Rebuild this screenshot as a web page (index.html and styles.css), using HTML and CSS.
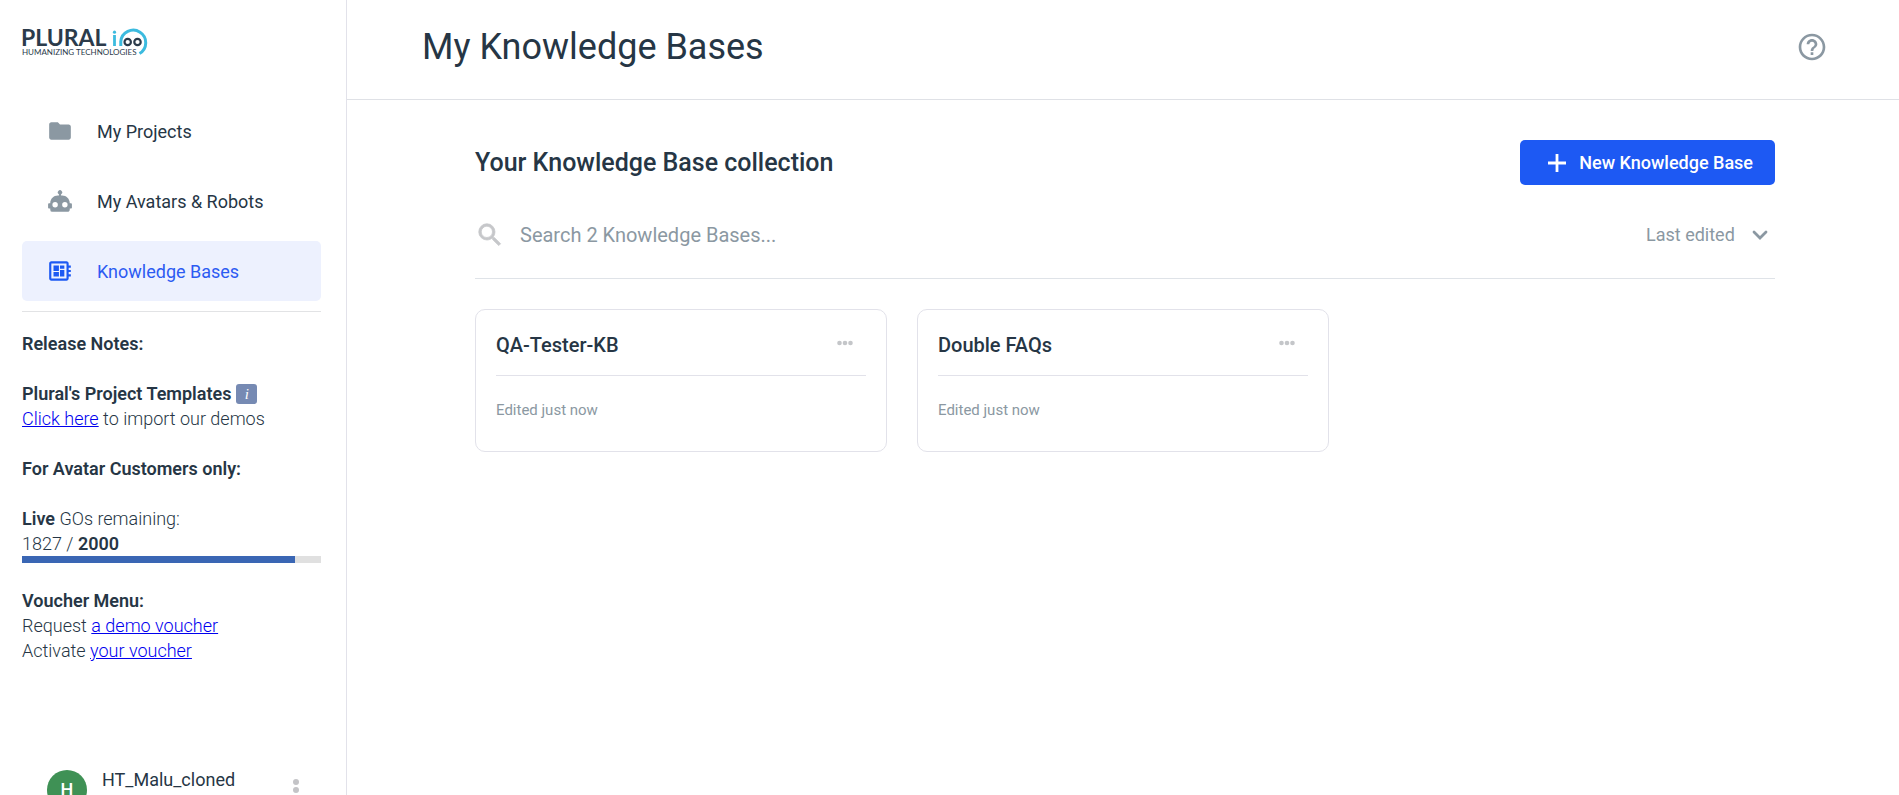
FILE: index.html
```html
<!DOCTYPE html>
<html lang="en">
<head>
<meta charset="utf-8">
<title>My Knowledge Bases</title>
<link rel="stylesheet" href="styles.css">
</head>
<body>
<div class="app">
  <aside class="sidebar">
    <a class="logo" href="#" aria-label="Plural home">
      <svg width="128" height="40" viewBox="0 -8 128 40">
        <text class="logo-name" x="-1" y="20">PLURAL</text>
        <text class="logo-tag" x="0" y="29">HUMANIZING TECHNOLOGIES</text>
        <path d="M92.500 9v11" stroke="#3cbbdf" stroke-width="2.800"/>
        <circle cx="92.500" cy="6.200" r="1.600" fill="#3cbbdf"/>
        <path d="M98.800 20V15.500A12.500 12.500 0 1 1 117.500 27.500" fill="none" stroke="#3cbbdf" stroke-width="3"/>
        <circle cx="105.700" cy="16" r="3.200" fill="none" stroke="#2b3b4b" stroke-width="2.200"/>
        <circle cx="115.500" cy="16" r="3.200" fill="none" stroke="#2b3b4b" stroke-width="2.200"/>
      </svg>
    </a>
    <nav class="nav">
      <a class="nav-item" href="#">
        <svg class="icon" width="26" height="26" viewBox="0 0 24 24"><path d="M10 4H4c-1.100 0-2 .9-2 2v12c0 1.100.9 2 2 2h16c1.100 0 2-.9 2-2V8c0-1.100-.9-2-2-2h-8z"/></svg>
        <span>My Projects</span>
      </a>
      <a class="nav-item" href="#">
        <svg class="icon" width="26" height="26" viewBox="0 0 24 24"><path d="M22 14h-1c0-3.870-3.130-7-7-7h-1V5.730A2 2 0 1 0 11 5.730V7h-1c-3.870 0-7 3.130-7 7H2c-.55 0-1 .45-1 1v3c0 .55.45 1 1 1h1v1a2 2 0 0 0 2 2h14c1.110 0 2-.89 2-2v-1h1c.55 0 1-.45 1-1v-3c0-.55-.45-1-1-1M7.500 18a2.500 2.500 0 1 1 0-5 2.500 2.500 0 0 1 0 5m9 0a2.500 2.500 0 1 1 0-5 2.500 2.500 0 0 1 0 5"/></svg>
        <span>My Avatars &amp; Robots</span>
      </a>
      <a class="nav-item active" href="#" aria-current="page">
        <svg class="icon" width="26" height="26" viewBox="0 0 24 24"><path d="M22 9V7h-2V5c0-1.100-.9-2-2-2H4c-1.100 0-2 .9-2 2v14c0 1.100.9 2 2 2h14c1.100 0 2-.9 2-2v-2h2v-2h-2v-2h2v-2h-2V9h2zm-4 10H4V5h14v14zM6 13h5v4H6zm6-6h4v3h-4zM6 7h5v5H6zm6 4h4v6h-4z"/></svg>
        <span>Knowledge Bases</span>
      </a>
    </nav>
    <section class="notes">
      <p><strong>Release Notes:</strong></p>
      <div>
        <p class="with-badge"><strong>Plural's Project Templates</strong><button class="info" type="button" aria-label="About templates"><i>i</i></button></p>
        <p><a href="#">Click here</a> to import our demos</p>
      </div>
      <p><strong>For Avatar Customers only:</strong></p>
      <div>
        <p><strong>Live</strong> GOs remaining:</p>
        <p>1827 / <strong>2000</strong></p>
        <div class="meter" role="progressbar" aria-label="Live GOs remaining" aria-valuenow="1827" aria-valuemin="0" aria-valuemax="2000"><div class="meter-fill" style="width:91.35%"></div></div>
      </div>
      <div class="voucher">
        <p><strong>Voucher Menu:</strong></p>
        <p>Request <a href="#">a demo voucher</a></p>
        <p>Activate <a href="#">your voucher</a></p>
      </div>
    </section>
    <div class="user">
      <span class="avatar">H</span>
      <span class="user-name">HT_Malu_cloned</span>
      <button class="icon-button" type="button" aria-label="Account menu">
        <svg width="8" height="24" viewBox="0 0 8 24" fill="#c4c4c7"><circle cx="4" cy="4" r="3"/><circle cx="4" cy="12" r="3"/><circle cx="4" cy="20" r="3"/></svg>
      </button>
    </div>
  </aside>

  <main class="main">
    <header class="header">
      <h1>My Knowledge Bases</h1>
      <button class="icon-button" type="button" aria-label="Help">
        <svg class="icon" width="32" height="32" viewBox="0 0 24 24"><path d="M11 18h2v-2h-2v2zm1-16C6.480 2 2 6.480 2 12s4.480 10 10 10 10-4.480 10-10S17.520 2 12 2zm0 18c-4.410 0-8-3.590-8-8s3.590-8 8-8 8 3.590 8 8-3.590 8-8 8zm0-14c-2.210 0-4 1.790-4 4h2c0-1.100.9-2 2-2s2 .9 2 2c0 2-3 1.750-3 5h2c0-2.250 3-2.500 3-5 0-2.210-1.790-4-4-4z"/></svg>
      </button>
    </header>
    <section class="content">
      <div class="title-row">
        <h2>Your Knowledge Base collection</h2>
        <button class="primary" type="button">
          <svg width="20" height="20" viewBox="0 0 20 20"><path d="M10 1v18M1 10h18" stroke="#fff" stroke-width="2.800"/></svg>
          New Knowledge Base
        </button>
      </div>
      <div class="filter-row">
        <label class="search">
          <svg width="30" height="30" viewBox="0 0 24 24" fill="#c6c7ca" stroke="#c6c7ca" stroke-width=".6"><path d="M15.500 14h-.79l-.28-.27A6.470 6.470 0 0 0 16 9.500 6.500 6.500 0 1 0 9.500 16c1.610 0 3.090-.59 4.230-1.570l.27.28v.79l5 4.990L20.490 19l-4.990-5zm-6 0C7.010 14 5 11.990 5 9.500S7.010 5 9.500 5 14 7.010 14 9.500 11.990 14 9.500 14z"/></svg>
          <input type="text" placeholder="Search 2 Knowledge Bases..." aria-label="Search knowledge bases">
        </label>
        <div class="sort">
          <select aria-label="Sort by"><option>Last edited</option></select>
          <svg width="16" height="10" viewBox="0 0 16 10"><path d="M2 2l6 6 6-6" fill="none" stroke="#8b98a2" stroke-width="2.800" stroke-linecap="round"/></svg>
        </div>
      </div>
      <div class="cards">
        <article class="card">
          <div class="card-head">
            <h3>QA-Tester-KB</h3>
            <button class="icon-button" type="button" aria-label="Options for QA-Tester-KB"><svg width="16" height="10" viewBox="0 0 16 10" fill="#c4c6c9"><circle cx="2.500" cy="3" r="2.300"/><circle cx="8" cy="3" r="2.300"/><circle cx="13.500" cy="3" r="2.300"/></svg></button>
          </div>
          <p>Edited just now</p>
        </article>
        <article class="card">
          <div class="card-head">
            <h3>Double FAQs</h3>
            <button class="icon-button" type="button" aria-label="Options for Double FAQs"><svg width="16" height="10" viewBox="0 0 16 10" fill="#c4c6c9"><circle cx="2.500" cy="3" r="2.300"/><circle cx="8" cy="3" r="2.300"/><circle cx="13.500" cy="3" r="2.300"/></svg></button>
          </div>
          <p>Edited just now</p>
        </article>
      </div>
    </section>
  </main>
</div>
</body>
</html>
```
FILE: styles.css
```css
* { box-sizing: border-box; }
body { margin: 0; font-family: Roboto, "Liberation Sans", sans-serif; font-size: 18px; line-height: 25px; color: #263645; background: #fff; }
h1, h2, h3, p { margin: 0; }
svg { display: block; flex: none; }
button, input, select { font: inherit; color: inherit; border: 0; padding: 0; background: none; }
button { cursor: pointer; }
strong { font-weight: 600; }
.icon { fill: #8b98a2; }
.icon-button { display: flex; align-items: center; }
.app { display: flex; height: 100vh; overflow: hidden; }

.sidebar { flex: 0 0 347px; padding: 18px 25px 0 22px; border-right: 1px solid #e2e2ea; overflow: hidden; }
.logo { display: block; }
.logo svg { overflow: visible; }
.logo-name { font: 700 23px Lato, sans-serif; fill: #2b3b4b; }
.logo-tag { font: 400 8px Lato, sans-serif; fill: #2b3b4b; }
.nav { display: grid; gap: 10px; margin-top: 43px; padding-bottom: 10px; border-bottom: 1px solid #e2e3e5; }
.nav-item { display: flex; align-items: center; gap: 24px; height: 60px; padding: 0 25px; border-radius: 5px; color: inherit; text-decoration: none; }
.nav-item.active { background: #edf1fe; color: #2c5bf2; }
.nav-item.active .icon { fill: #1d59f3; }

.notes { display: grid; gap: 25px; padding-top: 19px; font-weight: 300; }
.notes a { color: #0000ee; }
.with-badge { display: flex; align-items: center; gap: 5px; }
.info { width: 21px; height: 20px; border-radius: 3px; background: #768ab3; color: #fff; font: 15px/20px "Liberation Serif", serif; }
.meter { height: 7px; background: #e0e0e0; }
.meter-fill { height: 100%; background: #3a66b4; }
.user { display: flex; gap: 15px; margin-top: 107px; padding: 0 21px 0 25px; }
.avatar { flex: none; width: 40px; height: 40px; border-radius: 50%; background: #3f9155; color: #fff; font-weight: 500; line-height: 40px; text-align: center; }
.user-name { flex: 1; line-height: 20px; }
.user .icon-button { align-self: flex-start; padding-top: 8px; }

.main { flex: 1; min-width: 0; }
.header { display: flex; align-items: center; justify-content: space-between; height: 100px; padding: 0 71px 6px 75px; border-bottom: 1px solid #dfe1e6; }
h1 { font-size: 36px; font-weight: 400; line-height: 44px; }
.content { padding: 40px 124px 0 128px; }
.title-row { display: flex; align-items: center; justify-content: space-between; }
h2 { font-size: 25px; font-weight: 500; }
.primary { display: flex; align-items: center; gap: 12px; height: 45px; padding: 0 22px 0 27px; border-radius: 5px; background: #1d59f3; color: #fff; font-weight: 500; }
.filter-row { display: flex; align-items: center; justify-content: space-between; height: 94px; padding-top: 6px; border-bottom: 1px solid #dfe3e8; }
.search { display: flex; flex: 1; align-items: center; gap: 15px; color: #8b98a2; font-size: 20px; }
.search input { flex: 1; height: 40px; outline: 0; }
.search input::placeholder { color: #8b98a2; opacity: 1; }
.sort { display: grid; align-items: center; color: #8b98a2; }
.sort > * { grid-area: 1 / 1; }
.sort select { appearance: none; padding-right: 40px; height: 40px; }
.sort svg { justify-self: end; margin-right: 7px; pointer-events: none; }
.cards { display: grid; grid-template-columns: repeat(3, 1fr); gap: 30px; margin: 30px 4px 0 0; }
.card { padding: 0 20px; height: 143px; border: 1px solid #e2e2ea; border-radius: 10px; }
.card-head { display: flex; align-items: center; justify-content: space-between; height: 66px; padding: 5px 13px 0 0; border-bottom: 1px solid #e2e2ea; }
h3 { font-size: 20px; font-weight: 500; }
.card p { margin-top: 22px; font-size: 15px; color: #8b98a2; }
```
